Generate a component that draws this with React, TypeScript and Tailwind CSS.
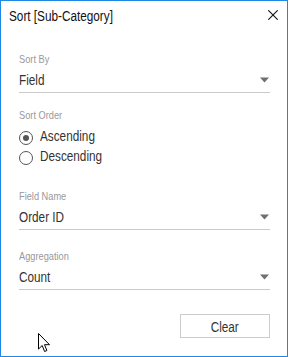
type SelectProps = {
  label: string;
  value: string;
};

// the source capture is squeezed horizontally, so text is narrowed to match
const narrow = "inline-block origin-left scale-x-[0.84] whitespace-nowrap";

function SelectField({ label, value }: SelectProps) {
  return (
    <div className="flex flex-col">
      <span className={`${narrow} text-[11px] leading-[13px] text-[#999999]`}>{label}</span>
      <div className="mt-[6px] flex items-start justify-between border-b border-[#cacaca] pb-[4px]">
        <span className={`${narrow} text-[14px] leading-[16px] text-[#333333]`}>{value}</span>
        <svg className="mr-[1px] mt-[5px]" width="9" height="6" viewBox="0 0 9 6">
          <path d="M0 0.5 H9 L4.5 5.5 Z" fill="#6f6f6f" />
        </svg>
      </div>
    </div>
  );
}

function Radio({ label, checked }: { label: string; checked?: boolean }) {
  return (
    <label className="flex h-[20px] items-start gap-[7px]">
      <span className="mt-[4px] grid h-[14px] w-[14px] shrink-0 place-items-center rounded-full border border-[#555555]">
        {checked && <span className="h-[6px] w-[6px] rounded-full bg-[#555555]" />}
      </span>
      <span className={`${narrow} mt-[1px] text-[14px] leading-[16px] text-[#333333]`}>{label}</span>
    </label>
  );
}

export default function App() {
  return (
    <div
      className="relative h-[357px] w-[288px] border border-[#1e88e5] bg-white"
      style={{ fontFamily: "'Liberation Sans', Arial, sans-serif" }}
    >
      <div className="flex items-start justify-between pl-[8px] pr-[9px] pt-[7px]">
        <h1 className={`${narrow} text-[14px] leading-[16px] text-[#111111]`}>Sort [Sub-Category]</h1>
        <svg width="10" height="10" viewBox="0 0 10 10" className="mt-[2px]">
          <path d="M0.3 0.3 L9.7 9.7 M9.7 0.3 L0.3 9.7" stroke="#111111" strokeWidth="1.1" />
        </svg>
      </div>

      <div className="flex flex-col pl-[18px] pr-[17px] pt-[29px]">
        <SelectField label="Sort By" value="Field" />

        <div className="mt-[16px] flex flex-col">
          <span className={`${narrow} text-[11px] leading-[13px] text-[#999999]`}>Sort Order</span>
          <div className="mt-[5px] flex flex-col">
            <Radio label="Ascending" checked />
            <Radio label="Descending" />
          </div>
        </div>

        <div className="mt-[23px]">
          <SelectField label="Field Name" value="Order ID" />
        </div>

        <div className="mt-[20px]">
          <SelectField label="Aggregation" value="Count" />
        </div>

        <div className="mt-[24px] flex justify-end">
          <button className="h-[24px] w-[90px] border border-[#cccccc] bg-white text-[#333333]">
            <span className="inline-block scale-x-[0.84] text-[14px] leading-[16px]">Clear</span>
          </button>
        </div>
      </div>

      <svg className="absolute left-[37px] top-[332px]" width="13" height="20" viewBox="0 0 13 20">
        <path
          d="M0.5 0.5 V16 L4.2 12.5 L6.6 18.5 L8.9 17.5 L6.5 11.7 H11.5 Z"
          fill="#ffffff"
          stroke="#000000"
          strokeWidth="1"
          strokeLinejoin="miter"
        />
      </svg>
    </div>
  );
}
